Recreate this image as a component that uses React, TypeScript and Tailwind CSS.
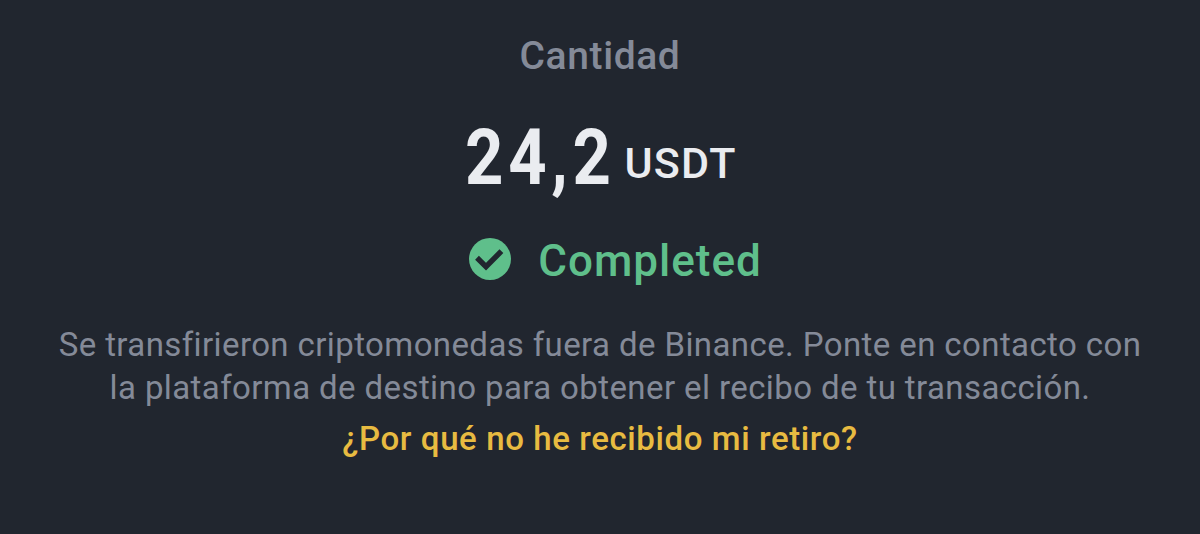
function CheckCircle() {
  return (
    <svg className="-mt-1 h-[42px] w-[42px] shrink-0" viewBox="0 0 42 42" fill="none">
      <circle cx="21" cy="21" r="21" fill="#5fbf8b" />
      <path d="M8 19.8 L17 28.6 L32.4 13.2" stroke="#21262f" strokeWidth="5.4" />
    </svg>
  );
}

export default function App() {
  return (
    <main className="flex h-[534px] w-[1200px] flex-col items-center overflow-hidden bg-[#21262f] pt-7 text-center font-['Roboto','Liberation_Sans',sans-serif]">
      {/* Amount */}
      <h1 className="h-14 text-[39px] leading-14 font-medium tracking-[0.6px] text-[#848a98]">
        Cantidad
      </h1>
      <div className="mt-[33px] flex h-20 items-center pl-0.5 text-[#eaecf0]">
        <div className="w-[159px] pt-0.5 text-left">
          <span className="inline-block origin-left scale-x-[0.87] text-[77px] leading-20 font-bold tracking-[5.4px]">
            24,2
          </span>
        </div>
        <span className="mt-3 text-[43px] leading-14 font-medium tracking-[1.2px]">USDT</span>
      </div>

      {/* Status */}
      <div className="mt-9 flex h-14 items-center gap-[27px] pl-[31px] text-[#5fbf8b]">
        <CheckCircle />
        <span className="text-[44px] leading-14 font-medium tracking-[1px]">Completed</span>
      </div>

      {/* Withdrawal note */}
      <p className="mt-[34px] text-[33px] leading-[43px] tracking-[0.4px] whitespace-nowrap text-[#848a98]">
        Se transfirieron criptomonedas fuera de Binance. Ponte en contacto con
        <br />
        la plataforma de destino para obtener el recibo de tu transacción.
      </p>
      <a href="#" className="mt-2 text-[33px] leading-[43px] font-medium tracking-[0.6px] text-[#e8bb41]">
        ¿Por qué no he recibido mi retiro?
      </a>
    </main>
  );
}
